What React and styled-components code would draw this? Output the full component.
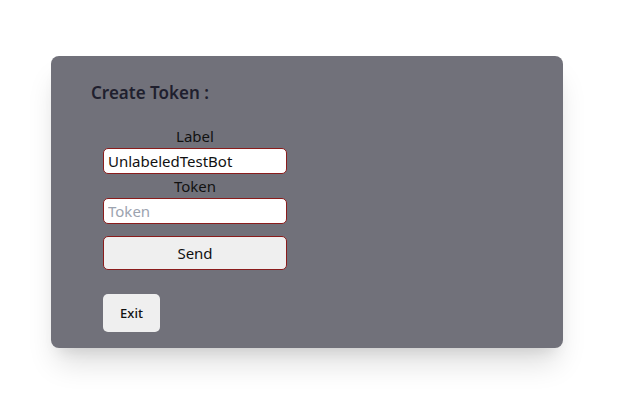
import React from 'react';
import styled, { createGlobalStyle } from 'styled-components';

const GlobalStyle = createGlobalStyle`
  body {
    margin: 0;
    background: #ffffff;
    font-family: "Noto Sans", "Open Sans", sans-serif;
  }
`;

const App = () => {
  return (
    <Page>
      <GlobalStyle />
      <Card>
        <Title>Create Token :</Title>
        <Form onSubmit={(e) => e.preventDefault()}>
          <FieldLabel>Label</FieldLabel>
          <Input type="text" defaultValue="UnlabeledTestBot" />
          <FieldLabel>Token</FieldLabel>
          <Input type="text" placeholder="Token" />
          <SendButton>Send</SendButton>
        </Form>
        <ExitButton>Exit</ExitButton>
      </Card>
    </Page>
  );
};

const Page = styled.div`
  padding: 56px 69px 66px 51px;
`;

const Card = styled.div`
  width: 512px;
  height: 292px;
  box-sizing: border-box;
  background-color: #71717a;
  border-radius: 8px;
  padding: 25px 40px 16px 40px;
  box-shadow: 0 20px 30px -6px rgba(0, 0, 0, 0.14), 0 10px 14px -8px rgba(0, 0, 0, 0.1);
`;

const Title = styled.h2`
  margin: 0;
  font-size: 17px;
  line-height: 24px;
  font-weight: 600;
  color: #1f1f2e;
`;

const Form = styled.form`
  width: 184px;
  margin: 19px 0 0 12px;
  display: flex;
  flex-direction: column;
  align-items: stretch;
`;

const FieldLabel = styled.label`
  text-align: center;
  font-size: 15px;
  line-height: 24px;
  color: #111111;
`;

const Input = styled.input`
  height: 26px;
  box-sizing: border-box;
  border: 1px solid #8a1c1c;
  border-radius: 5px;
  background: #ffffff;
  padding: 0 4px;
  font-family: "Noto Sans", "Open Sans", sans-serif;
  font-size: 15px;
  color: #111111;
  outline: none;
  &::placeholder {
    color: #9ca3af;
  }
`;

const SendButton = styled.button`
  margin-top: 12px;
  height: 34px;
  border: 1px solid #8a1c1c;
  border-radius: 5px;
  background: #efefef;
  font-family: "Noto Sans", "Open Sans", sans-serif;
  font-size: 15px;
  color: #111111;
`;

const ExitButton = styled.button`
  display: block;
  margin: 24px 0 0 12px;
  width: 57px;
  height: 38px;
  border: none;
  border-radius: 5px;
  background: #efefef;
  font-family: "Noto Sans", "Open Sans", sans-serif;
  font-size: 13px;
  font-weight: 500;
  color: #111111;
`;

export default App;
